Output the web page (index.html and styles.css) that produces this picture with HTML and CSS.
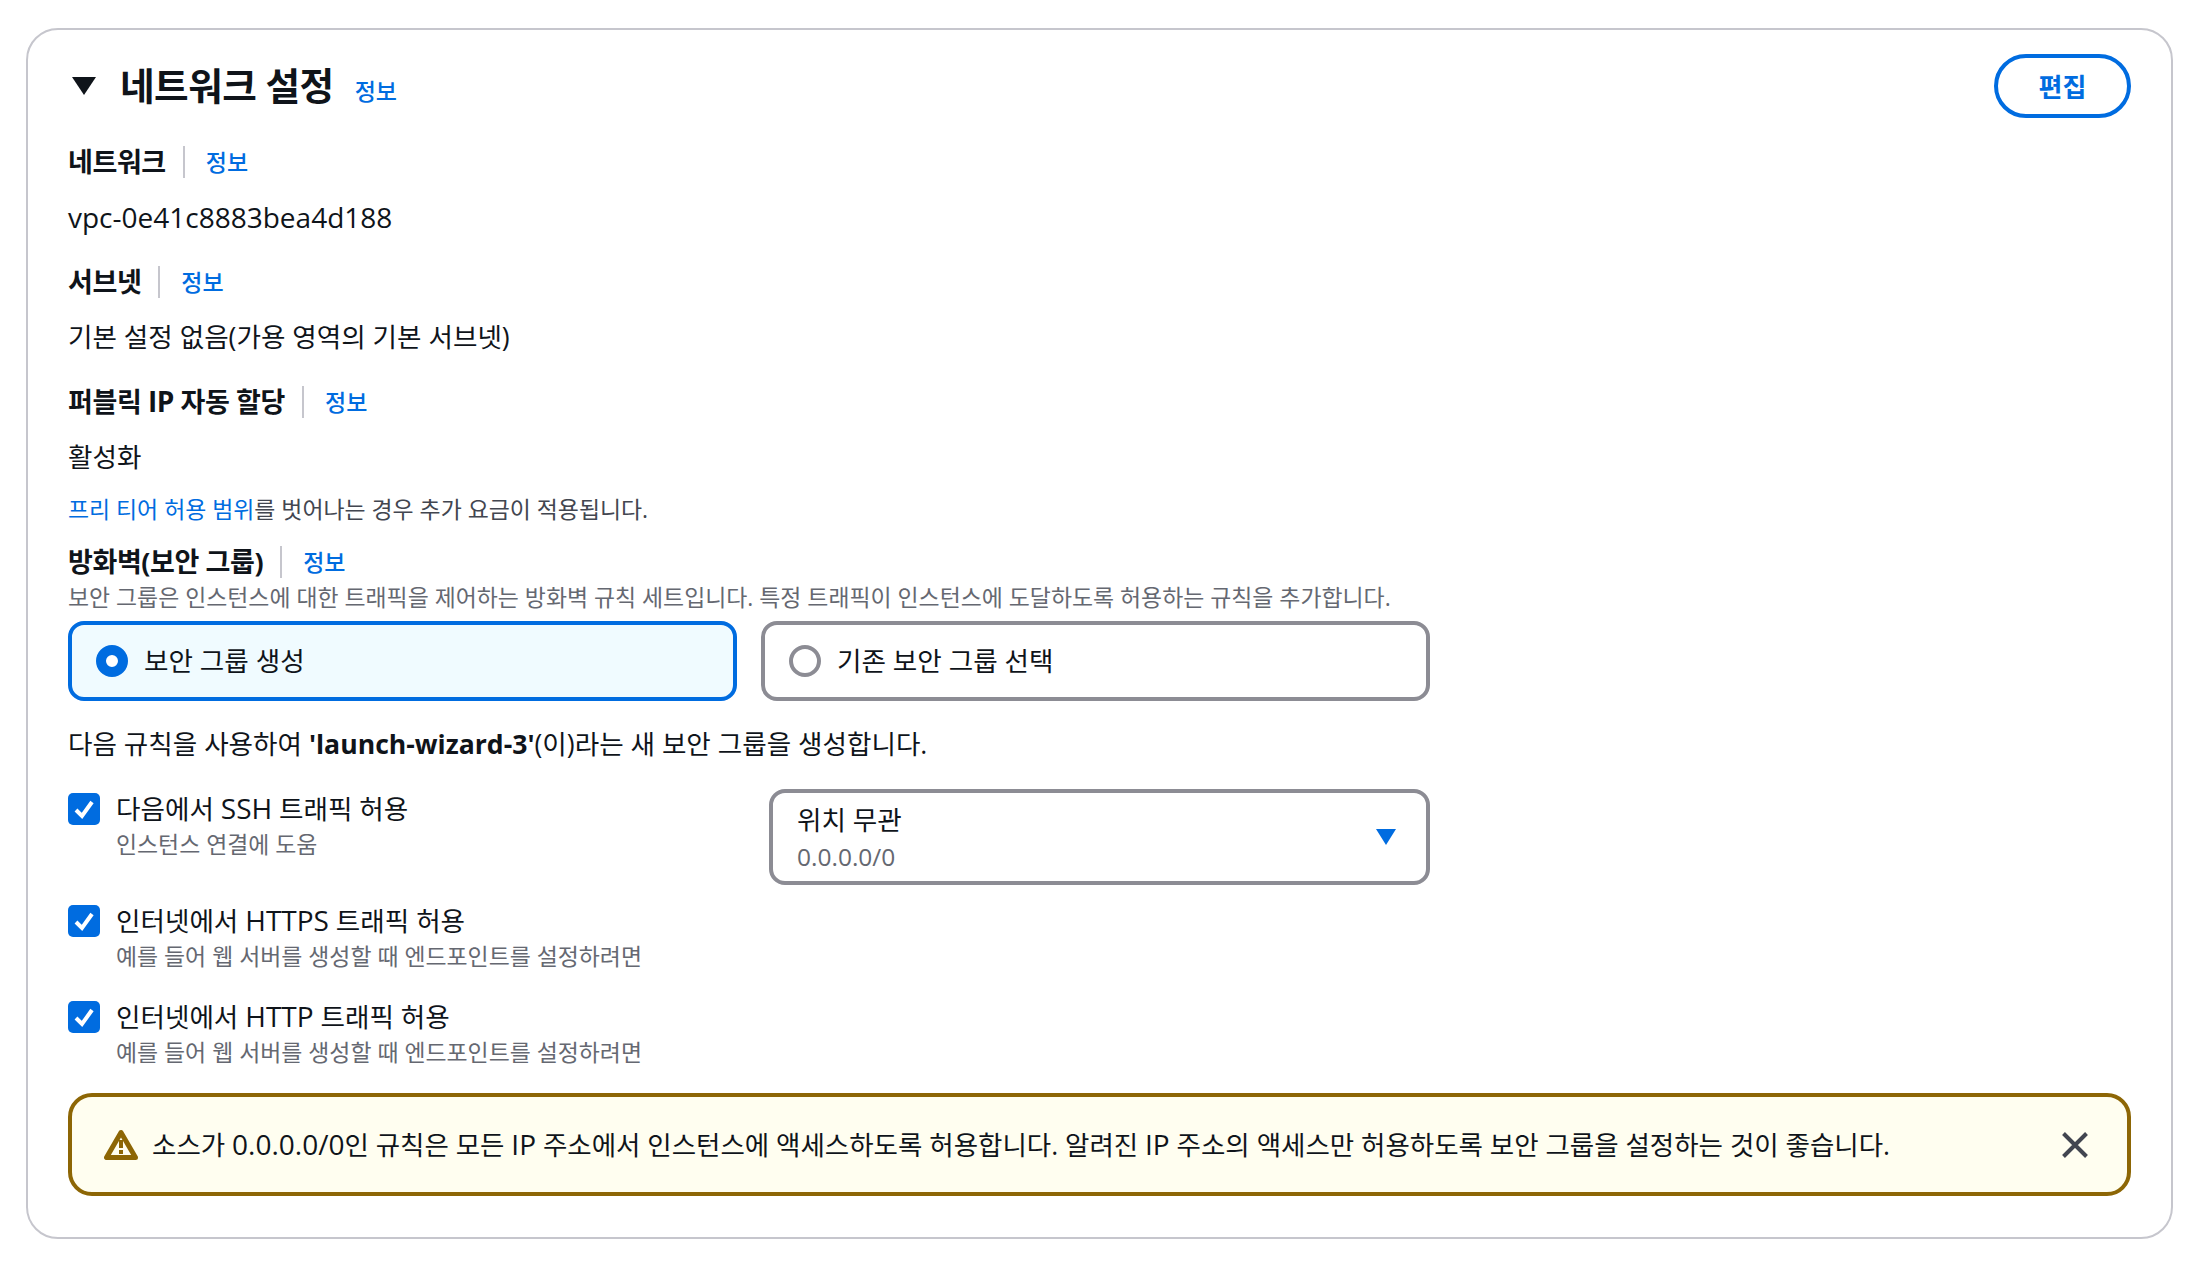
FILE: index.html
```html
<!DOCTYPE html>
<html lang="ko">

<head>
    <meta charset="UTF-8">
    <title>네트워크 설정</title>
    <link rel="stylesheet" href="styles.css">
</head>

<body>
    <section class="card">
        <header class="card-head">
            <svg class="caret" width="26" height="20" viewBox="0 0 26 20"><path d="M1 1h24L13 19z" fill="#0f141a" /></svg>
            <h2>네트워크 설정</h2>
            <a class="info head-info">정보</a>
            <button class="edit">편집</button>
        </header>

        <div class="label-row"><span class="label">네트워크</span><a class="info">정보</a></div>
        <p class="value vpc">vpc-0e41c8883bea4d188</p>

        <div class="label-row gap"><span class="label">서브넷</span><a class="info">정보</a></div>
        <p class="value">기본 설정 없음(가용 영역의 기본 서브넷)</p>

        <div class="label-row gap"><span class="label">퍼블릭 <span class="en">IP</span> 자동 할당</span><a class="info">정보</a></div>
        <p class="value">활성화</p>
        <p class="note"><a>프리 티어 허용 범위</a>를 벗어나는 경우 추가 요금이 적용됩니다.</p>

        <div class="label-row fw"><span class="label">방화벽(보안 그룹)</span><a class="info">정보</a></div>
        <p class="desc">보안 그룹은 인스턴스에 대한 트래픽을 제어하는 방화벽 규칙 세트입니다. 특정 트래픽이 인스턴스에 도달하도록 허용하는 규칙을 추가합니다.</p>

        <div class="tiles">
            <div class="tile on"><span class="radio"></span>보안 그룹 생성</div>
            <div class="tile"><span class="radio"></span>기존 보안 그룹 선택</div>
        </div>

        <p class="rule-text">다음 규칙을 사용하여 <b>'launch-wizard-3'</b>(이)라는 새 보안 그룹을 생성합니다.</p>

        <div class="ssh-row">
            <div class="check-row ssh">
                <span class="check"><svg width="32" height="32" viewBox="0 0 32 32"><path d="M8 17l6 6 10-14" fill="none" stroke="#fff" stroke-width="4" /></svg></span>
                <div>
                    <div>다음에서 <span class="en">SSH</span> 트래픽 허용</div>
                    <div class="desc">인스턴스 연결에 도움</div>
                </div>
            </div>
            <div class="select">
                <div>
                    <div class="select-title">위치 무관</div>
                    <div class="select-sub">0.0.0.0/0</div>
                </div>
                <svg width="22" height="18" viewBox="0 0 22 18"><path d="M1 1h20L11 17z" fill="#006ce0" /></svg>
            </div>
        </div>

        <div class="check-row https">
            <span class="check"><svg width="32" height="32" viewBox="0 0 32 32"><path d="M8 17l6 6 10-14" fill="none" stroke="#fff" stroke-width="4" /></svg></span>
            <div>
                <div>인터넷에서 <span class="en">HTTPS</span> 트래픽 허용</div>
                <div class="desc">예를 들어 웹 서버를 생성할 때 엔드포인트를 설정하려면</div>
            </div>
        </div>

        <div class="check-row http">
            <span class="check"><svg width="32" height="32" viewBox="0 0 32 32"><path d="M8 17l6 6 10-14" fill="none" stroke="#fff" stroke-width="4" /></svg></span>
            <div>
                <div>인터넷에서 <span class="en">HTTP</span> 트래픽 허용</div>
                <div class="desc">예를 들어 웹 서버를 생성할 때 엔드포인트를 설정하려면</div>
            </div>
        </div>

        <div class="alert">
            <svg width="34" height="32" viewBox="0 0 34 32"><path d="M17 3.500L2.500 28.500h29z" fill="none" stroke="#8d6605" stroke-width="5" stroke-linejoin="round" /><path d="M15 11h4v8h-4zM15 21h4v4h-4z" fill="#8d6605" /></svg>
            <span class="alert-text">소스가 <span class="en">0.0.0.0/0</span>인 규칙은 모든 <span class="en">IP</span> 주소에서 인스턴스에 액세스하도록 허용합니다. 알려진 <span class="en">IP</span> 주소의 액세스만 허용하도록 보안 그룹을 설정하는 것이 좋습니다.</span>
            <svg width="26" height="26" viewBox="0 0 26 26"><path d="M1.500 1.500l23 23M24.500 1.500l-23 23" fill="none" stroke="#424650" stroke-width="4" /></svg>
        </div>
    </section>
</body>

</html>
```

FILE: styles.css
```css
* {
    margin: 0;
    padding: 0;
    box-sizing: border-box;
}

body {
    padding: 28px 19px 25px 26px;
    background: #fff;
    color: #0f141a;
    font-family: "Open Sans", "Noto Sans CJK KR", sans-serif;
    font-size: 26.6px;
    line-height: 40px;
}

a {
    color: #006ce0;
}

.en {
    font-size: 28px;
    line-height: 1;
}

.card {
    height: 1211px;
    padding: 24px 40px 0;
    border: 2px solid #c6c6cd;
    border-radius: 32px;
}

.card-head {
    display: flex;
    align-items: center;
    height: 64px;
    margin-bottom: 24px;
}

.caret {
    margin: 0 23px 0 3px;
}

h2 {
    font-size: 37.6px;
    font-weight: 700;
    letter-spacing: -0.5px;
}

.head-info {
    margin-left: 21px;
    padding-top: 9px;
}

.edit {
    width: 137px;
    height: 64px;
    margin-left: auto;
    border: 4px solid #006ce0;
    border-radius: 32px;
    background: #fff;
    color: #006ce0;
    font: 700 26px "Open Sans", "Noto Sans CJK KR", sans-serif;
}

.label-row {
    display: flex;
    align-items: center;
    height: 40px;
}

.label {
    padding-right: 17px;
    font-weight: 700;
    font-size: 27px;
    letter-spacing: -0.4px;
}

.info {
    display: block;
    font-size: 23px;
    font-weight: 500;
    line-height: 32px;
}

.label + .info {
    padding-left: 21px;
    border-left: 2px solid #c6c6cd;
}

.gap {
    margin-top: 25px;
}

.value {
    margin-top: 15px;
}

.vpc {
    font-size: 28px;
}

.note {
    margin-top: 17px;
    color: #424650;
    font-size: 22.9px;
    line-height: 32px;
}

.fw {
    margin-top: 16px;
}

.desc {
    color: #656871;
    font-size: 22.9px;
    line-height: 32px;
}

.tiles {
    display: flex;
    gap: 24px;
    margin-top: 7px;
}

.tile {
    display: flex;
    align-items: center;
    gap: 16px;
    width: 669px;
    height: 80px;
    padding-left: 24px;
    border: 4px solid #8c8c94;
    border-radius: 16px;
}

.tile.on {
    border-color: #006ce0;
    background: #f0fbff;
}

.radio {
    width: 32px;
    height: 32px;
    border: 4px solid #8c8c94;
    border-radius: 50%;
    background: #fff;
}

.on .radio {
    border: 10px solid #006ce0;
}

.rule-text {
    margin-top: 23px;
}

.ssh-row {
    display: flex;
    height: 96px;
    margin-top: 25px;
}

.check-row {
    display: flex;
    gap: 16px;
}

.ssh {
    width: 701px;
}

.check {
    width: 32px;
    height: 32px;
    margin-top: 4px;
    border-radius: 5px;
    background: #006ce0;
}

.check svg {
    display: block;
}

.select {
    display: flex;
    align-items: center;
    justify-content: space-between;
    width: 661px;
    height: 96px;
    padding: 0 29px 0 24px;
    border: 4px solid #8c8c94;
    border-radius: 16px;
}

.select-title {
    padding-top: 1px;
    line-height: 38px;
}

.select-sub {
    color: #656871;
    font-size: 24.500px;
    line-height: 36px;
}

.https {
    margin-top: 16px;
}

.http {
    margin-top: 24px;
}

.alert {
    display: flex;
    align-items: center;
    height: 103px;
    margin-top: 24px;
    padding: 0 39px 0 32px;
    border: 4px solid #8d6605;
    border-radius: 24px;
    background: #fffef0;
}

.alert-text {
    flex: 1;
    margin-left: 14px;
    font-size: 26.500px;
}
```
